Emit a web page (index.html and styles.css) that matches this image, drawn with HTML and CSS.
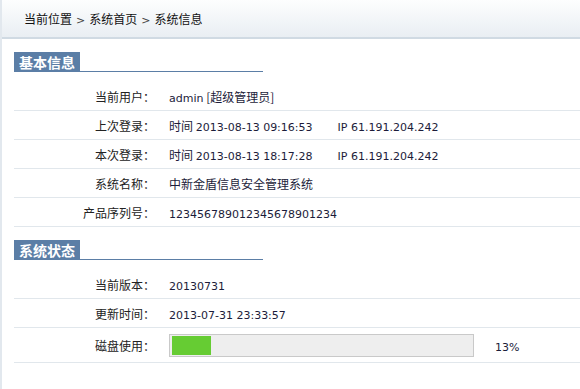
FILE: index.html
```html
<!DOCTYPE html>
<html lang="zh-CN">
<head>
  <meta charset="UTF-8">
  <title>系统信息</title>
  <link rel="stylesheet" href="styles.css">
</head>
<body>

  <!-- BREADCRUMB -->
  <div class="crumb">当前位置<span class="sep">&gt;</span>系统首页<span class="sep">&gt;</span>系统信息</div>

  <div class="main">
    <!-- 基本信息 -->
    <div class="sec-head"><span class="sec-title">基本信息</span></div>
    <div class="info">
      <div class="row">
        <div class="label">当前用户：</div>
        <div class="value"><span class="num">admin</span> [超级管理员]</div>
      </div>
      <div class="row">
        <div class="label">上次登录：</div>
        <div class="value">时间 <span class="num">2013-08-13 09:16:53</span><span class="num ip">IP 61.191.204.242</span></div>
      </div>
      <div class="row">
        <div class="label">本次登录：</div>
        <div class="value">时间 <span class="num">2013-08-13 18:17:28</span><span class="num ip">IP 61.191.204.242</span></div>
      </div>
      <div class="row">
        <div class="label">系统名称：</div>
        <div class="value">中新金盾信息安全管理系统</div>
      </div>
      <div class="row">
        <div class="label">产品序列号：</div>
        <div class="value"><span class="num">123456789012345678901234</span></div>
      </div>
    </div>

    <!-- 系统状态 -->
    <div class="sec-head"><span class="sec-title">系统状态</span></div>
    <div class="info">
      <div class="row">
        <div class="label">当前版本：</div>
        <div class="value"><span class="num">20130731</span></div>
      </div>
      <div class="row">
        <div class="label">更新时间：</div>
        <div class="value"><span class="num">2013-07-31 23:33:57</span></div>
      </div>
      <div class="row row-bar">
        <div class="label">磁盘使用：</div>
        <div class="value">
          <div class="bar"><div class="bar-fill" style="width:13%"></div></div>
          <span class="num pct">13%</span>
        </div>
      </div>
    </div>
  </div>

</body>
</html>
```

FILE: styles.css
```css
body {
  margin: 0;
  min-height: 389px;
  border-left: 2px solid #e2e8ee;
  background: #fff;
  color: #222;
  font-family: "Noto Sans CJK SC", sans-serif;
  font-size: 12px;
  box-sizing: border-box;
}
.num { font-family: "DejaVu Sans", sans-serif; font-size: 11px; }

.crumb {
  height: 37px;
  line-height: 38px;
  padding-left: 22px;
  background: linear-gradient(#fdfefe, #e9eef3);
  border-bottom: 2px solid #d0dae3;
  color: #111;
}
.sep {
  margin: 0 4px;
  font-family: "DejaVu Sans", sans-serif;
  font-size: 11px;
  color: #444;
}

.main { padding-left: 12px; }

.sec-head {
  width: 249px;
  margin-top: 13px;
  height: 19px;
  border-bottom: 1px solid #5b7ea6;
}
.sec-title {
  display: inline-block;
  height: 20px;
  line-height: 20px;
  padding: 0 5px;
  background: #5b7ea6;
  color: #fff;
  font-size: 14px;
  font-weight: bold;
}

.info { margin-top: 10px; }
.row {
  display: grid;
  grid-template-columns: 141px 1fr;
  column-gap: 14px;
  align-items: center;
  min-height: 28px;
  border-bottom: 1px solid #e1e7ec;
}
.label { text-align: right; }
.value { color: #1c1c3a; }
.ip { margin-left: 25px; }

.row-bar { min-height: 34px; }
.row-bar .value { display: flex; align-items: center; }
.bar {
  width: 301px;
  height: 19px;
  padding: 1px;
  border: 1px solid #c9c9c9;
  background: #eee;
}
.bar-fill { height: 19px; margin-left: 1px; background: #66cc33; }
.pct { margin-left: 21px; padding-top: 5px; }
```
